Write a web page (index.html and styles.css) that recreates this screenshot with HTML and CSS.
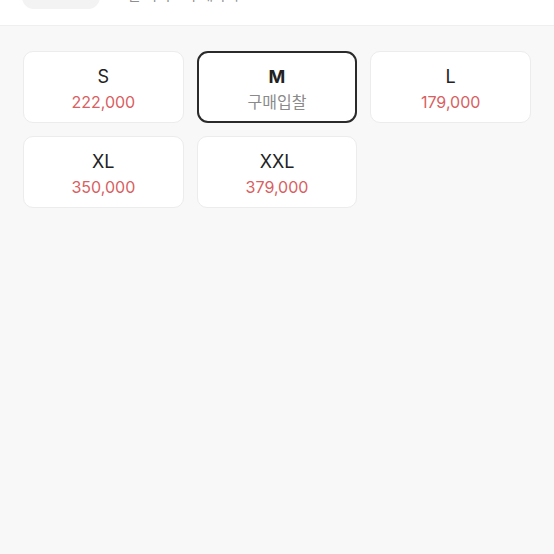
FILE: index.html
```html
<!DOCTYPE html>
<html lang="ko">
<head>
    <meta charset="UTF-8">
    <meta name="viewport" content="width=device-width, initial-scale=1.0">
    <title>사이즈 선택</title>
    <link rel="stylesheet" href="styles.css">
</head>
<body>

<div class="top-bar">
    <div class="top-row">
        <div class="thumb"></div>
        <div class="top-text">모든 사이즈 구매가격</div>
    </div>
</div>

<!-- Size grid -->
<div class="size-grid">
    <div class="size-card">
        <div class="size-name">S</div>
        <div class="size-price">222,000</div>
    </div>
    <div class="size-card selected">
        <div class="size-name">M</div>
        <div class="size-price bid">구매입찰</div>
    </div>
    <div class="size-card">
        <div class="size-name">L</div>
        <div class="size-price">179,000</div>
    </div>
    <div class="size-card">
        <div class="size-name">XL</div>
        <div class="size-price">350,000</div>
    </div>
    <div class="size-card">
        <div class="size-name">XXL</div>
        <div class="size-price">379,000</div>
    </div>
</div>

</body>
</html>
```

FILE: styles.css
```css
body {
    font-family: Inter, "Noto Sans CJK KR", sans-serif;
    background-color: #f8f8f8;
    margin: 0;
    padding: 0;
    height: 100vh;
    overflow: hidden;
}
.top-bar {
    background-color: #fff;
    height: 25px;
    border-bottom: 1px solid #efefef;
    overflow: hidden;
}
.top-row {
    display: flex;
    align-items: flex-end;
    gap: 15px;
    margin-top: -30px;
    padding-left: 22px;
}
.thumb {
    width: 78px;
    height: 39px;
    border-radius: 12px;
    background-color: #f3f3f3;
}
.top-text {
    font-size: 14px;
    line-height: 20px;
    color: #8e8e8e;
    margin-bottom: 19px;
    position: relative;
    top: 15px;
}
.size-grid {
    display: grid;
    grid-template-columns: repeat(3, 1fr);
    gap: 13px;
    padding: 25px 23px 0;
}
.size-card {
    box-sizing: border-box;
    height: 72px;
    padding-top: 12px;
    background-color: #fff;
    border: 1px solid #ececec;
    border-radius: 10px;
    text-align: center;
}
.size-card.selected {
    border: 2px solid #2a2a2a;
    border-radius: 11px;
    padding-top: 11px;
}
.size-name {
    font-size: 18px;
    line-height: 25px;
    color: #222;
}
.selected .size-name {
    font-weight: 700;
}
.size-price {
    font-size: 16px;
    line-height: 26px;
    color: #d8605f;
}
.size-price.bid {
    color: #8a8a8a;
}
```
